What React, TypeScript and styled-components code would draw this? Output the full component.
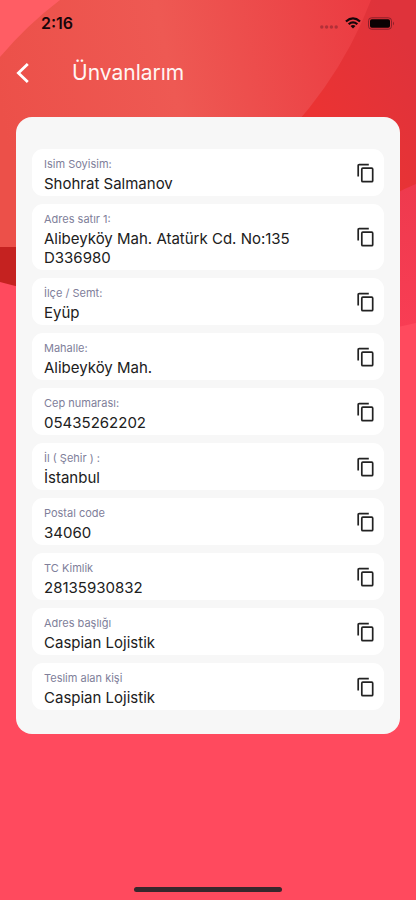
import React from "react";
import styled, { createGlobalStyle } from "styled-components";

const GlobalStyle = createGlobalStyle`
  *, *::before, *::after { box-sizing: border-box; }
  body {
    margin: 0;
    background: #ff4a5e;
    font-family: Inter, "Open Sans", sans-serif;
  }
`;

const Screen = styled.div`
  position: relative;
  isolation: isolate;
  display: flex;
  flex-direction: column;
  min-height: 100vh;
  overflow: hidden;
`;

const Backdrop = styled.svg`
  position: absolute;
  top: 0;
  left: 0;
  z-index: -1;
  width: 100%;
  height: 340px;
`;

const StatusBar = styled.div`
  display: flex;
  align-items: center;
  justify-content: space-between;
  height: 46px;
  padding: 0 21px 0 41px;
  color: #16060a;
`;

const Clock = styled.time`
  font-size: 16px;
  line-height: 20px;
  font-weight: 600;
`;

const Indicators = styled.div`
  display: flex;
  align-items: center;
  gap: 7px;

  svg { display: block; }
`;

const Header = styled.header`
  display: flex;
  align-items: center;
  gap: 32px;
  height: 54px;
  padding: 0 5px;
`;

const BackButton = styled.button`
  display: grid;
  place-items: center;
  width: 35px;
  height: 44px;
  padding: 0;
  border: 0;
  background: none;
  color: #fff;
  cursor: pointer;
`;

const Title = styled.h1`
  margin: 0;
  color: #fff5f3;
  font-size: 21px;
  line-height: 28px;
  font-weight: 400;
`;

const Panel = styled.main`
  margin: 17px 16px 0;
  padding: 32px 16px 24px;
  border-radius: 16px;
  background: #f7f7f7;
`;

const AddressList = styled.ul`
  display: flex;
  flex-direction: column;
  gap: 8px;
  margin: 0;
  padding: 0;
  list-style: none;
`;

const AddressRow = styled.li`
  display: flex;
  align-items: center;
  gap: 8px;
  padding: 0 6px 0 12px;
  border-radius: 11px;
  background: #fff;
`;

const RowText = styled.div`
  flex: 1;
  min-width: 0;
  padding: 7px 0 3px;
`;

const Label = styled.div`
  color: #80809a;
  font-size: 11px;
  line-height: 16px;
`;

const Value = styled.div`
  max-width: 280px;
  margin-top: 2px;
  color: #202020;
  font-size: 15px;
  line-height: 19px;
`;

const CopyButton = styled.button`
  display: grid;
  place-items: center;
  width: 24px;
  height: 24px;
  padding: 0;
  border: 0;
  background: none;
  color: #222;
  cursor: pointer;
`;

const HomeIndicator = styled.div`
  width: 148px;
  height: 5px;
  margin: auto auto 8px;
  border-radius: 3px;
  background: #38272c;
`;

const addressFields = [
  { label: "Isim Soyisim:", value: "Shohrat Salmanov" },
  { label: "Adres satır 1:", value: "Alibeyköy Mah. Atatürk Cd. No:135 D336980" },
  { label: "İlçe / Semt:", value: "Eyüp" },
  { label: "Mahalle:", value: "Alibeyköy Mah." },
  { label: "Cep numarası:", value: "05435262202" },
  { label: "İl ( Şehir ) :", value: "İstanbul" },
  { label: "Postal code", value: "34060" },
  { label: "TC Kimlik", value: "28135930832" },
  { label: "Adres başlığı", value: "Caspian Lojistik" },
  { label: "Teslim alan kişi", value: "Caspian Lojistik" },
];

function CurvedBackdrop() {
  return (
    <Backdrop viewBox="0 0 416 340" preserveAspectRatio="none" aria-hidden="true">
      <defs>
        <linearGradient id="coral" gradientUnits="userSpaceOnUse" x1="0" y1="110" x2="380" y2="30">
          <stop offset="0" stopColor="#ec5049" />
          <stop offset="0.45" stopColor="#ee5953" />
          <stop offset="1" stopColor="#eb3a41" />
        </linearGradient>
        <linearGradient id="scarlet" gradientUnits="userSpaceOnUse" x1="320" y1="120" x2="416" y2="60">
          <stop offset="0" stopColor="#eb3333" />
          <stop offset="1" stopColor="#df333b" />
        </linearGradient>
        <linearGradient id="rose" x1="0" y1="0" x2="0" y2="1">
          <stop offset="0" stopColor="#ee3a4e" />
          <stop offset="1" stopColor="#f93d54" />
        </linearGradient>
      </defs>
      <rect width="416" height="340" fill="#ff4a5e" />
      <path d="M0 247H100V300Q45 295 0 282Z" fill="#c52220" />
      <path d="M0 0H416V130L300 247H0Z" fill="url(#coral)" />
      <path d="M371 0H416V200H250V170Q335 95 371 0Z" fill="url(#scarlet)" />
      <path d="M416 184Q370 202 330 250V338Q370 334 416 323Z" fill="url(#rose)" />
      <path d="M0 0H60Q27 25 0 57Z" fill="#ff5d64" />
    </Backdrop>
  );
}

function CopyIcon() {
  return (
    <svg width="20" height="22" viewBox="0 0 20 22" fill="none" stroke="currentColor" strokeWidth="1.7" aria-hidden="true">
      <path d="M2.2 14.6V3.6Q2.2 2.6 3.2 2.6H12.8" />
      <rect x="5.8" y="6.2" width="10.9" height="13.5" rx="1" />
    </svg>
  );
}

export default function App() {
  return (
    <Screen>
      <GlobalStyle />
      <CurvedBackdrop />
      <StatusBar>
        <Clock>2:16</Clock>
        <Indicators>
          <svg width="18" height="12" viewBox="0 0 18 12" fill="#8c2530" opacity="0.6" aria-hidden="true">
            <circle cx="1.8" cy="10" r="1.7" />
            <circle cx="6.6" cy="10" r="1.7" />
            <circle cx="11.4" cy="10" r="1.7" />
            <circle cx="16.2" cy="10" r="1.7" />
          </svg>
          <svg width="16" height="12" viewBox="0 0 16 12" fill="currentColor" aria-hidden="true">
            <path d="M.2 3.7Q8-3.1 15.8 3.7L14.3 5.2Q8-.2 1.7 5.2Z" />
            <path d="M2.9 6.4Q8 1.9 13.1 6.4L11.5 7.9Q8 5 4.5 7.9Z" />
            <path d="M5.5 9Q8 6.9 10.5 9L8 11.6Z" />
          </svg>
          <svg width="27" height="13" viewBox="0 0 27 13" aria-hidden="true">
            <rect x="0.5" y="0.8" width="23" height="11.4" rx="3" fill="none" stroke="#8c1f29" />
            <rect x="2" y="2.3" width="20" height="8.4" rx="1.8" fill="#090203" />
            <path d="M25 4.5Q27 6.5 25 8.5Z" fill="#8c1f29" />
          </svg>
        </Indicators>
      </StatusBar>
      <Header>
        <BackButton aria-label="Geri">
          <svg width="14" height="20" viewBox="0 0 14 20" fill="none" stroke="currentColor" strokeWidth="2.8" aria-hidden="true">
            <path d="M11.8 1L2.4 10L11.8 19" />
          </svg>
        </BackButton>
        <Title>Ünvanlarım</Title>
      </Header>
      <Panel>
        <AddressList>
          {addressFields.map(({ label, value }) => (
            <AddressRow key={label}>
              <RowText>
                <Label>{label}</Label>
                <Value>{value}</Value>
              </RowText>
              <CopyButton aria-label={`${label} kopyala`}>
                <CopyIcon />
              </CopyButton>
            </AddressRow>
          ))}
        </AddressList>
      </Panel>
      <HomeIndicator />
    </Screen>
  );
}
